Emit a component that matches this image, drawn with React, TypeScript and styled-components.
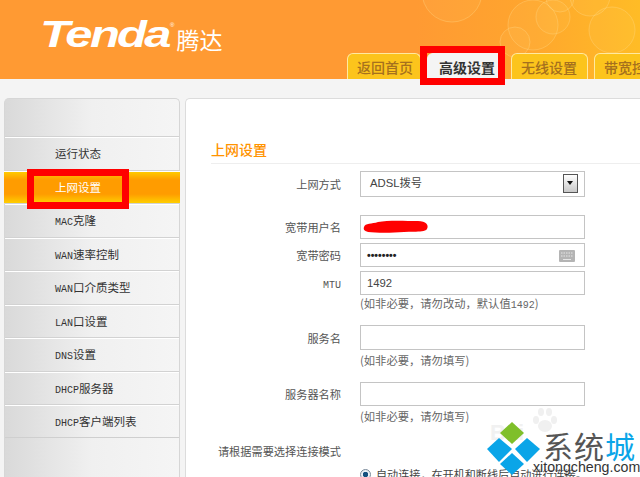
import React from 'react';
import styled, { createGlobalStyle } from 'styled-components';

const CJK = '"Noto Sans CJK SC", "Liberation Sans", sans-serif';

const GlobalStyle = createGlobalStyle`
  html, body {
    margin: 0;
    padding: 0;
    background: #f4f4f4;
    font-family: ${CJK};
  }
`;

const Page = styled.div`
  position: relative;
  width: 640px;
  height: 477px;
  overflow: hidden;
  background: #f4f4f4;
`;

const Header = styled.header`
  position: relative;
  height: 79px;
  background: linear-gradient(90deg, #ff9a33 0%, #ff9a33 65%, #ffa52e 82%, #ffbc26 100%);
  display: flex;
  align-items: flex-end;
  padding-left: 347px;
  box-sizing: border-box;
`;

const Bubbles = styled.svg`
  position: absolute;
  top: 0;
  right: 0;
`;

const Logo = styled.div`
  position: absolute;
  left: 40px;
  top: 16px;
  display: flex;
  align-items: flex-end;
  color: #fff;
`;

const LogoWord = styled.span`
  font-family: 'Liberation Sans', sans-serif;
  font-style: italic;
  font-weight: 700;
  font-size: 36px;
  line-height: 38px;
  letter-spacing: -2px;
  transform: scaleX(1.36);
  transform-origin: left bottom;
  width: 130px;
`;

const LogoMark = styled.span`
  font-family: 'Liberation Sans', sans-serif;
  font-size: 6px;
  align-self: flex-start;
  margin: 6px 0 0 0;
`;

const LogoCn = styled.span`
  font-size: 23px;
  line-height: 28px;
  margin: 0 0 1px 2px;
`;

const Tabs = styled.nav`
  position: relative;
  display: flex;
  gap: 6px;
`;

const Tab = styled.div<{ $active?: boolean; $w: number }>`
  position: relative;
  width: ${(p) => p.$w}px;
  height: 26px;
  box-sizing: border-box;
  border-radius: 6px 6px 0 0;
  border: 1px solid ${(p) => (p.$active ? '#f4f4f4' : '#ffe9a0')};
  border-bottom: 0;
  background: ${(p) => (p.$active ? '#f4f4f4' : '#fcc41c')};
  color: ${(p) => (p.$active ? '#333' : '#a5701e')};
  font-size: 14px;
  font-weight: ${(p) => (p.$active ? 700 : 500)};
  line-height: 26px;
  padding-left: ${(p) => (p.$active ? 11 : 9)}px;
  white-space: nowrap;
  overflow: ${(p) => (p.$active ? 'visible' : 'hidden')};
`;

const RedFrame = styled.span<{ $l: number; $t: number; $w: number; $h: number }>`
  position: absolute;
  z-index: 2;
  left: ${(p) => p.$l}px;
  top: ${(p) => p.$t}px;
  width: ${(p) => p.$w}px;
  height: ${(p) => p.$h}px;
  box-sizing: border-box;
  border: 7px solid #ff0000;
`;

const Body = styled.div`
  display: flex;
  gap: 5px;
  padding: 19px 0 0 4px;
`;

const Sidebar = styled.aside`
  flex: none;
  width: 176px;
  height: 400px;
  box-sizing: border-box;
  border: 1px solid #d6d6d6;
  border-width: 1px 1px 0 1px;
  border-radius: 5px 5px 0 0;
  padding-top: 37px;
  background: linear-gradient(90deg, #d9d9d9 0%, #f0f0f0 50%, #f5f5f5 100%);
`;

const MenuItem = styled.div<{ $active?: boolean }>`
  position: relative;
  height: 33.5px;
  box-sizing: border-box;
  font-size: 11.5px;
  line-height: 32px;
  color: ${(p) => (p.$active ? '#fff' : '#333')};
  border-top: 1px solid #d2d2d2;
  box-shadow: inset 0 1px 0 #fff;
  margin: ${(p) => (p.$active ? '0 -1px' : '0')};
  padding-left: ${(p) => (p.$active ? '51px' : '50px')};
  background: ${(p) =>
    p.$active
      ? 'linear-gradient(180deg, #ffd000 0%, #ff9c00 28%, #ff9c00 72%, #ffce00 100%)'
      : 'transparent'};
  &:last-child {
    border-bottom: 1px solid #cfcfcf;
  }
`;

const Latin = styled.span`
  font-family: 'Liberation Mono', monospace;
  font-size: 10px;
`;

const Main = styled.main`
  flex: 1;
  height: 400px;
  box-sizing: border-box;
  background: #fff;
  border-top: 1px solid #dcdcdc;
  border-left: 1px solid #dcdcdc;
  border-radius: 5px 0 0 0;
  padding: 40px 0 0 25px;
`;

const Title = styled.h2`
  margin: 0 0 7px;
  height: 24px;
  font-size: 14px;
  font-weight: 500;
  line-height: 20px;
  color: #ff9300;
  border-bottom: 1px solid #eeeeee;
`;

const Row = styled.div<{ $gap: number; $h?: number }>`
  display: flex;
  align-items: center;
  height: ${(p) => p.$h ?? 24}px;
  margin-bottom: ${(p) => p.$gap}px;
`;

const Label = styled.label`
  flex: none;
  width: 130px;
  text-align: right;
  margin-right: 19px;
  font-size: 11.2px;
  color: #555;
  white-space: nowrap;
`;

const Field = styled.div`
  position: relative;
  flex: none;
  width: 225px;
  height: 100%;
  box-sizing: border-box;
  border: 1px solid #c4c4c4;
  background: #fff;
  font-family: 'Liberation Sans', ${CJK};
  font-size: 11.3px;
  line-height: 22px;
  padding-left: 6px;
  color: #444;
`;

const SelectValue = styled.span`
  padding-left: 3px;
  line-height: 23px;
`;

const SelectButton = styled.span`
  position: absolute;
  right: 6px;
  top: 2px;
  width: 15px;
  height: 19px;
  box-sizing: border-box;
  border: 1px solid #555;
  background: linear-gradient(180deg, #fff, #c8c8c8);
  &::after {
    content: '';
    position: absolute;
    left: 3px;
    top: 6px;
    border: 3.5px solid transparent;
    border-top: 4px solid #111;
  }
`;

const Dots = styled.span`
  font-family: 'Liberation Sans', sans-serif;
  font-size: 10.5px;
  font-weight: 700;
  color: #222;
  line-height: 22px;
  display: inline-block;
  vertical-align: top;
`;

const KeyIcon = styled.svg`
  position: absolute;
  right: 9px;
  top: 6px;
`;

const Scribble = styled.svg`
  position: absolute;
  left: 1px;
  top: 3px;
`;

const Hint = styled.div<{ $gap: number }>`
  margin: 0 0 ${(p) => p.$gap}px 149px;
  font-size: 11.3px;
  line-height: 16px;
  color: #666;
  white-space: nowrap;
`;

const HintNum = styled.span`
  font-family: 'Liberation Mono', monospace;
  font-size: 10px;
`;

const RadioRow = styled.div`
  display: flex;
  align-items: center;
  gap: 5px;
  margin-left: 149px;
  font-size: 11.1px;
  line-height: 16px;
  color: #444;
  white-space: nowrap;
`;

const Radio = styled.span`
  flex: none;
  width: 11px;
  height: 11px;
  box-sizing: border-box;
  border-radius: 50%;
  border: 1px solid #7a8a9a;
  background: radial-gradient(circle, #14507f 0 2.5px, #e8eef4 3px);
`;

const Watermark = styled.div`
  position: absolute;
  left: 487px;
  top: 421px;
  width: 153px;
  height: 56px;
`;

const Diamonds = styled.svg`
  position: absolute;
  left: 0;
  top: 0;
`;

const Paw = styled.svg`
  position: absolute;
  left: 45px;
  top: -14px;
`;

const WaterFaint = styled.span`
  position: absolute;
  left: 3px;
  top: -1px;
  font-family: 'Liberation Sans', sans-serif;
  font-size: 22px;
  font-weight: 700;
  color: #f1f1f1;
`;

const WaterCn = styled.span`
  position: absolute;
  left: 56px;
  top: 6px;
  font-size: 30px;
  line-height: 36px;
  letter-spacing: 1px;
  color: #555;
  white-space: nowrap;
`;

const WaterCnBlue = styled.span`
  color: #0aa5e8;
`;

const WaterUrl = styled.span`
  position: absolute;
  left: 46px;
  top: 36px;
  font-family: 'Liberation Sans', sans-serif;
  font-size: 14.2px;
  line-height: 20px;
  color: #333;
  white-space: nowrap;
  text-shadow: 0 0 2px #fff;
`;

const App = () => (
  <Page>
    <GlobalStyle />
    <Header>
      <Bubbles width="240" height="79" viewBox="0 0 240 79" fill="none">
        <g stroke="#ffd98a" strokeOpacity="0.35" fill="#ffe08a" fillOpacity="0.08">
          <circle cx="52" cy="-8" r="30" />
          <circle cx="133" cy="25" r="25" />
          <circle cx="153" cy="17" r="17" />
          <circle cx="212" cy="30" r="23" />
          <circle cx="160" cy="-2" r="14" />
          <circle cx="115" cy="42" r="15" />
          <circle cx="190" cy="-4" r="20" />
        </g>
      </Bubbles>
      <Logo>
        <LogoWord>Tenda</LogoWord>
        <LogoMark>®</LogoMark>
        <LogoCn>腾达</LogoCn>
      </Logo>
      <Tabs>
        <Tab $w={74}>返回首页</Tab>
        <Tab $active $w={78}>
          <span>高级设置</span>
          <RedFrame $l={-8} $t={-8} $w={85} $h={39} />
        </Tab>
        <Tab $w={77}>无线设置</Tab>
        <Tab $w={60}>带宽控制</Tab>
      </Tabs>
    </Header>
    <Body>
      <Sidebar>
        <MenuItem>运行状态</MenuItem>
        <MenuItem $active>
          上网设置
          <RedFrame $l={23} $t={-2} $w={102} $h={40} />
        </MenuItem>
        <MenuItem>
          <Latin>MAC</Latin>克隆
        </MenuItem>
        <MenuItem>
          <Latin>WAN</Latin>速率控制
        </MenuItem>
        <MenuItem>
          <Latin>WAN</Latin>口介质类型
        </MenuItem>
        <MenuItem>
          <Latin>LAN</Latin>口设置
        </MenuItem>
        <MenuItem>
          <Latin>DNS</Latin>设置
        </MenuItem>
        <MenuItem>
          <Latin>DHCP</Latin>服务器
        </MenuItem>
        <MenuItem>
          <Latin>DHCP</Latin>客户端列表
        </MenuItem>
      </Sidebar>
      <Main>
        <Title>上网设置</Title>
        <Row $gap={18} $h={26}>
          <Label>上网方式</Label>
          <Field>
            <SelectValue>ADSL拨号</SelectValue>
            <SelectButton />
          </Field>
        </Row>
        <Row $gap={4}>
          <Label>宽带用户名</Label>
          <Field>
            <Scribble width="68" height="16" viewBox="0 0 68 16">
              <path
                d="M2 8 C3 4 10 5 16 3 C26 1 44 2 56 2 C64 2 67 6 65 10 C62 14 52 12 42 13 C30 14 14 14 6 13 C3 12 1 11 2 8 Z"
                fill="#ff0000"
              />
            </Scribble>
          </Field>
        </Row>
        <Row $gap={4}>
          <Label>宽带密码</Label>
          <Field>
            <Dots>••••••••</Dots>
            <KeyIcon width="16" height="12" viewBox="0 0 16 12">
              <rect width="16" height="12" rx="1" fill="#b4b4b4" />
              <path
                d="M2 3h12M2 6h12"
                stroke="#e6e6e6"
                strokeWidth="1"
                strokeDasharray="1.5 1"
              />
              <path d="M4 9.5h8" stroke="#e6e6e6" strokeWidth="1" />
            </KeyIcon>
          </Field>
        </Row>
        <Row $gap={0}>
          <Label>
            <Latin>MTU</Latin>
          </Label>
          <Field>1492</Field>
        </Row>
        <Hint $gap={11}>
          (如非必要，请勿改动，默认值<HintNum>1492</HintNum>)
        </Hint>
        <Row $gap={2} $h={25}>
          <Label>服务名</Label>
          <Field />
        </Row>
        <Hint $gap={14}>(如非必要，请勿填写)</Hint>
        <Row $gap={2}>
          <Label>服务器名称</Label>
          <Field />
        </Row>
        <Hint $gap={17}>(如非必要，请勿填写)</Hint>
        <Row $gap={5} $h={20}>
          <Label>请根据需要选择连接模式</Label>
        </Row>
        <RadioRow>
          <Radio />
          自动连接，在开机和断线后自动进行连接。
        </RadioRow>
      </Main>
    </Body>
    <Watermark>
      <WaterFaint>Bai</WaterFaint>
      <Paw width="26" height="26" viewBox="0 0 26 26" fill="#f0f0f0">
        <ellipse cx="13" cy="19" rx="7" ry="6" />
        <ellipse cx="4" cy="13" rx="3" ry="4" />
        <ellipse cx="22" cy="13" rx="3" ry="4" />
        <ellipse cx="9" cy="5" rx="3" ry="4" />
        <ellipse cx="17" cy="5" rx="3" ry="4" />
      </Paw>
      <Diamonds width="56" height="56" viewBox="0 0 56 56">
        <path d="M25 1 L37 12 L25 23 L13 12 Z" fill="#7fbf2a" />
        <path d="M12 17 L25 28 L12 41 L0 28 Z" fill="#0aa5e8" />
        <path d="M40 17 L53 28 L40 41 L28 28 Z" fill="#0aa5e8" />
        <path d="M25 32 L37 43 L25 54 L13 43 Z" fill="#0aa5e8" />
      </Diamonds>
      <WaterCn>
        系统<WaterCnBlue>城</WaterCnBlue>
      </WaterCn>
      <WaterUrl>xitongcheng.com</WaterUrl>
    </Watermark>
  </Page>
);

export default App;
